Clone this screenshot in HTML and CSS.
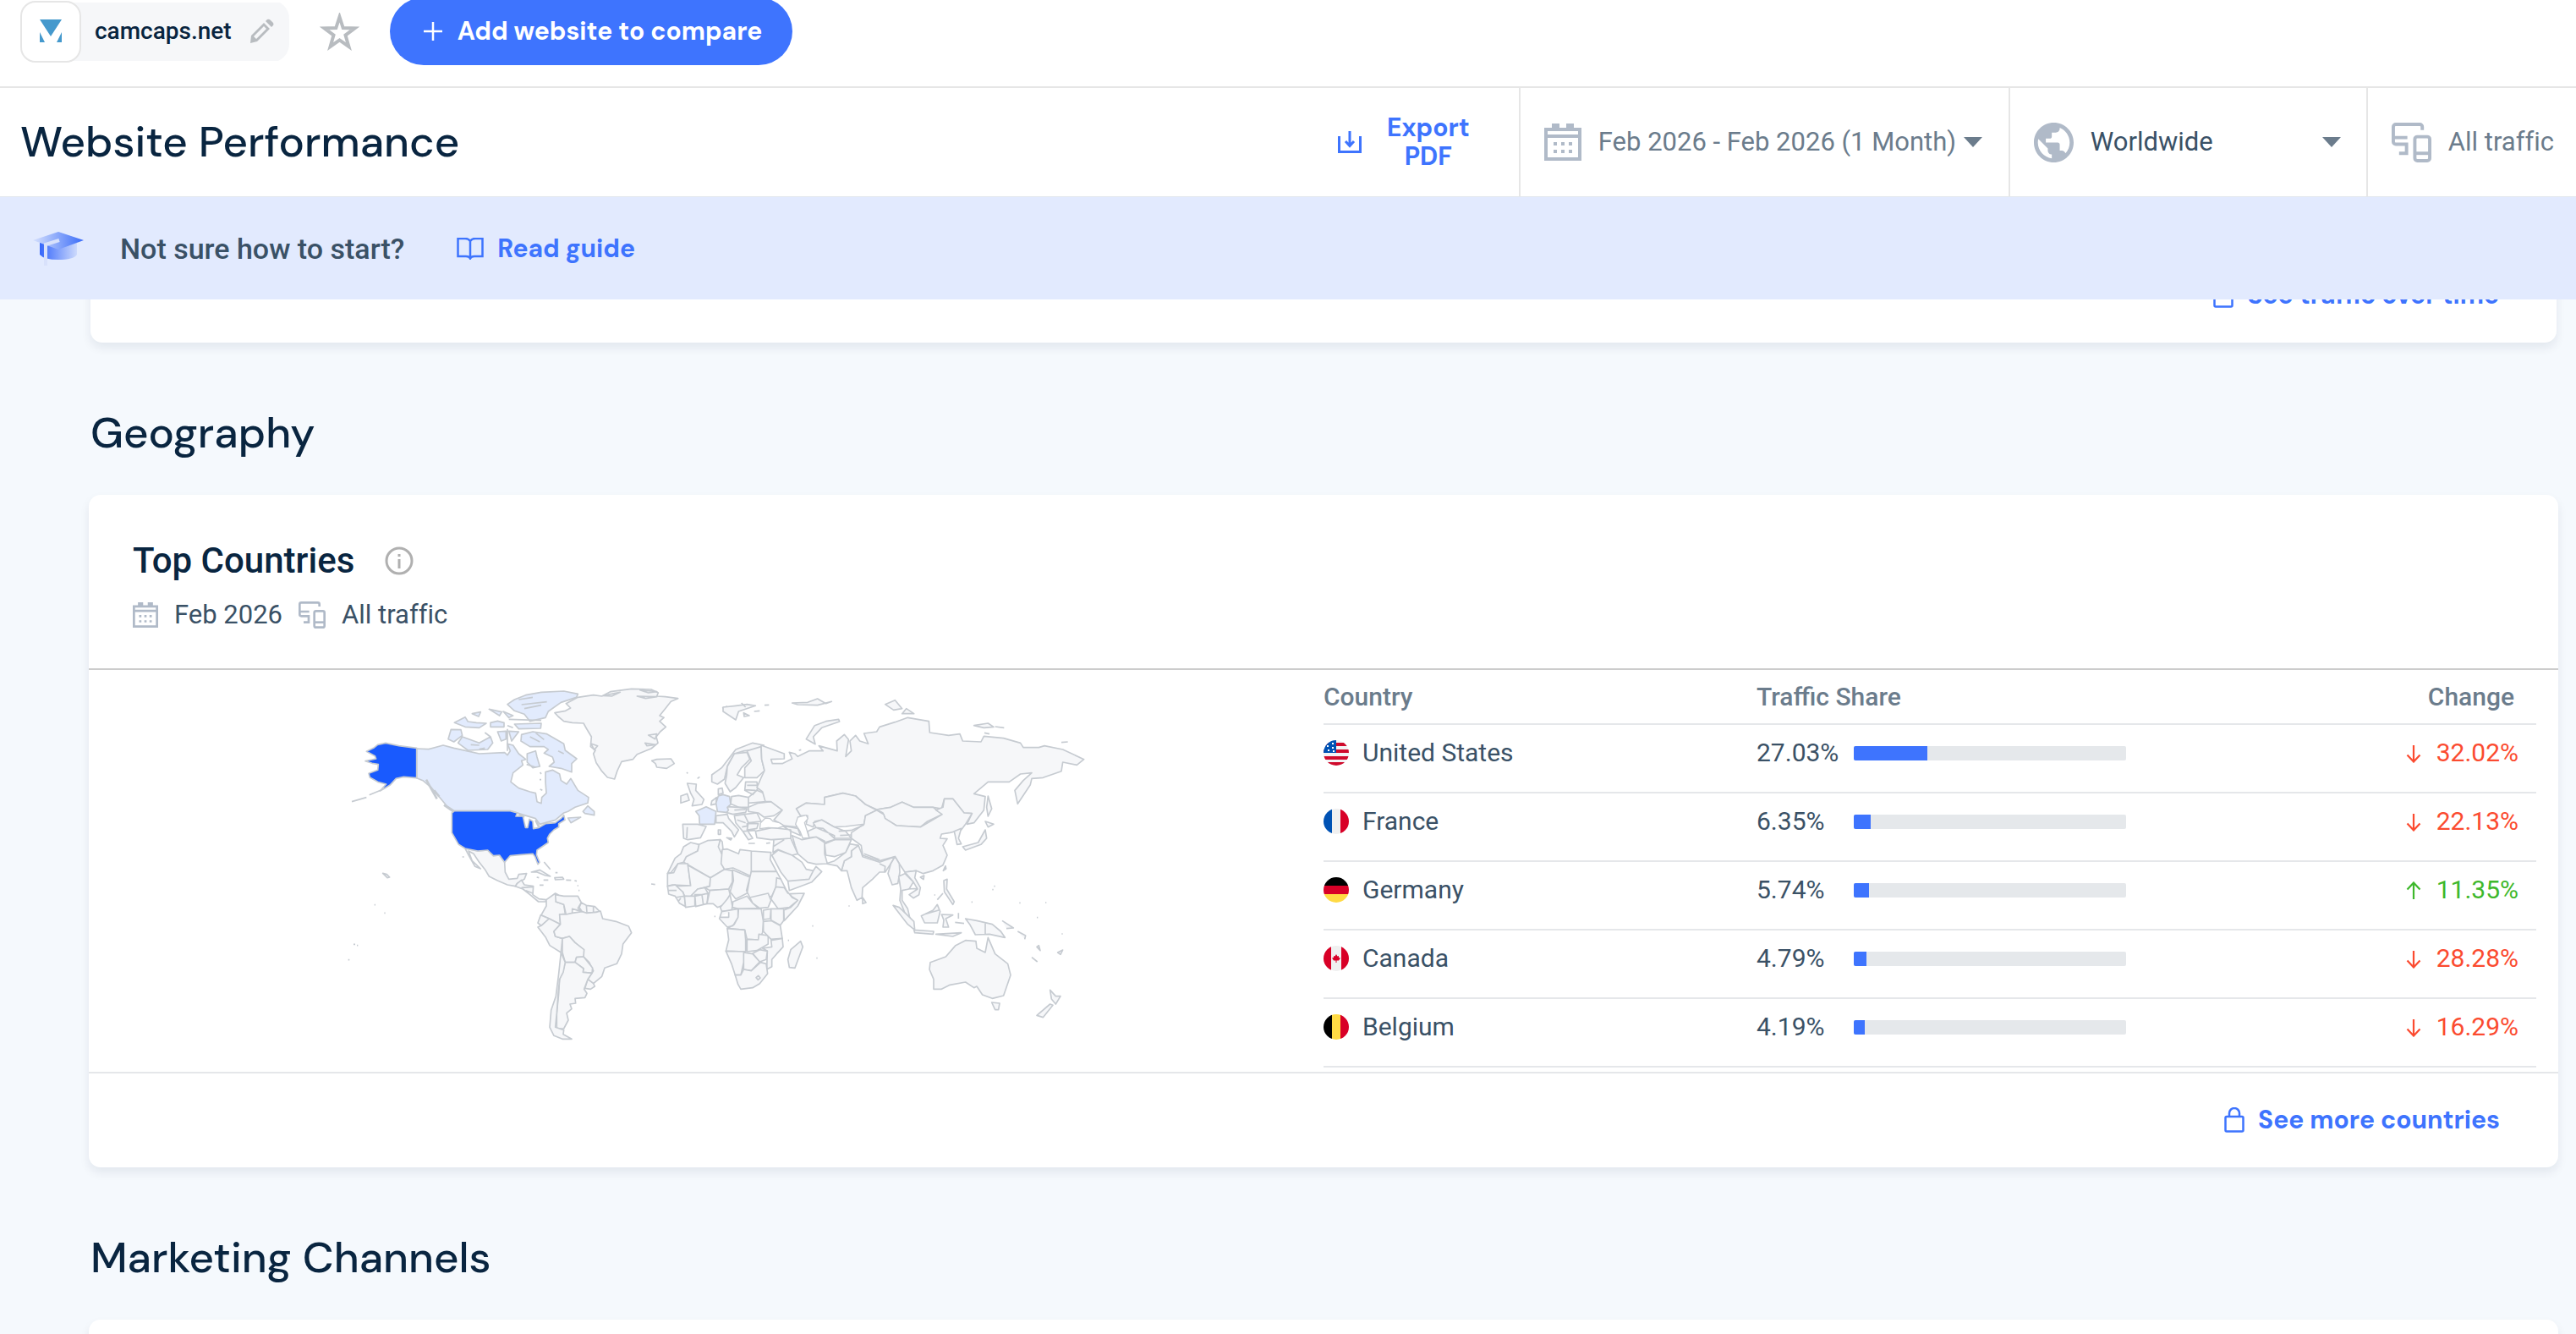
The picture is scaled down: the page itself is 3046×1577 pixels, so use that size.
FILE: index.html
```
<!DOCTYPE html>
<html lang="en">
<head>
  <meta charset="UTF-8" />
  <meta name="viewport" content="width=device-width, initial-scale=1.0"/>
  <title>Website Performance</title>
  <link rel="stylesheet" href="styles.css">
</head>
<body>

  <!-- Shared icons -->
  <svg class="sprite" aria-hidden="true">
    <symbol id="i-calendar" viewBox="0 0 44 44">
      <path d="M9 0h9v5h8V0h9v5h9v39H0V5h9zM4 9v4h36V9zM4 17v23h36V17z" fill-rule="evenodd"/>
      <path d="M11 22h4v4h-4zM20 22h4v4h-4zM29 22h4v4h-4zM11 31h4v4h-4zM20 31h4v4h-4zM29 31h4v4h-4z"/>
    </symbol>
    <symbol id="i-devices" viewBox="0 0 48 48">
      <g fill="none" stroke="currentColor" stroke-width="4">
        <path d="M37 9V5a3 3 0 0 0-3-3H5a3 3 0 0 0-3 3v18a3 3 0 0 0 3 3h13v11H9M2 18h17"/>
        <rect x="28" y="17" width="18" height="29" rx="3"/>
        <path d="M28 37h18"/>
      </g>
    </symbol>
    <symbol id="i-globe" viewBox="2 2 20 20">
      <path d="M12 2C6.480 2 2 6.480 2 12s4.480 10 10 10 10-4.480 10-10S17.520 2 12 2zm-1 17.930c-3.950-.490-7-3.850-7-7.930 0-.620.080-1.210.210-1.790L9 15v1c0 1.100.900 2 2 2v1.930zm6.900-2.540c-.260-.810-1-1.390-1.900-1.390h-1v-3c0-.550-.450-1-1-1H8v-2h2c.550 0 1-.450 1-1V7h2c1.100 0 2-.900 2-2v-.410c2.930 1.190 5 4.060 5 7.410 0 2.080-.800 3.970-2.100 5.390z"/>
    </symbol>
    <symbol id="i-caret" viewBox="0 0 22 12"><path d="M0 0h22L11 12z"/></symbol>
    <symbol id="i-lock" viewBox="0 0 24 30">
      <g fill="none" stroke="currentColor" stroke-width="2.500">
        <rect x="1.500" y="11" width="21" height="17.500" rx="1.500"/>
        <path d="M6 11V7a6 6 0 0 1 12 0v4"/>
      </g>
    </symbol>
    <symbol id="i-down" viewBox="0 0 18 22"><path d="M9 1v19M1.500 12.500L9 20.500l7.500-8" fill="none" stroke="currentColor" stroke-width="2.200"/></symbol>
    <symbol id="i-up" viewBox="0 0 18 22"><path d="M9 21V2M1.500 9.500L9 1.500l7.500 8" fill="none" stroke="currentColor" stroke-width="2.200"/></symbol>
  </svg>

  <!-- Sticky top area -->
  <header class="top">
    <div class="site-bar">
      <div class="site-chip">
        <span class="favicon">
          <svg width="28" height="28" viewBox="0 0 28 28"><path d="M1 0h26L14 20zM1 15l6 12H1zM27 15l-6 12h6z" fill="#4599cd"/></svg>
        </span>
        <span class="site-name">camcaps.net</span>
        <button class="icon-btn" aria-label="Edit website">
          <svg width="30" height="30" viewBox="0 0 30 30" fill="#b8bcc0"><path d="M2 20L17 5l7 7L9 27l-8 2zM5 21l3 3L20 12l-3-3z" fill-rule="evenodd"/><path d="M19 3l2-2q2-1 4 1l3 3q1 2 0 3l-2 2z"/></svg>
        </button>
      </div>
      <button class="icon-btn star" aria-label="Add to favorites">
        <svg width="47" height="46" viewBox="0 0 47 46"><path d="M23.500 5l4.200 13 13.800.4-11 8.200 3.900 13.400-10.900-7.600-10.900 7.600 3.900-13.400-11-8.200 13.800-.4z" fill="none" stroke="#b8bcc0" stroke-width="4"/></svg>
      </button>
      <button class="compare-btn">
        <svg width="22" height="22" viewBox="0 0 22 22"><path d="M11 0v22M0 11h22" stroke="#fff" stroke-width="2.500"/></svg>
        Add website to compare
      </button>
    </div>

    <div class="title-bar">
      <h1>Website Performance</h1>
      <button class="export-btn">
        <svg width="28" height="26" viewBox="0 0 28 26"><path d="M1.500 6v18.500h25V6M14 0v17M9 12l5 5.500 5-5.500" fill="none" stroke="#3e74fe" stroke-width="3"/></svg>
        <span>Export PDF</span>
      </button>
      <div class="filter filter-date">
        <svg class="icon" width="44" height="44"><use href="#i-calendar"/></svg>
        <select aria-label="Date range"><option>Feb 2026 - Feb 2026 (1 Month)</option></select>
        <svg class="caret" width="22" height="12"><use href="#i-caret"/></svg>
      </div>
      <div class="filter filter-country">
        <svg class="icon" width="47" height="47"><use href="#i-globe"/></svg>
        <select class="dark" aria-label="Country"><option>Worldwide</option></select>
        <svg class="caret" width="22" height="12"><use href="#i-caret"/></svg>
      </div>
      <button class="filter filter-traffic">
        <svg class="icon" width="47" height="47"><use href="#i-devices"/></svg>
        <span>All traffic</span>
      </button>
    </div>

    <div class="guide-bar">
      <svg width="62" height="42" viewBox="0 0 62 42">
        <defs>
          <linearGradient id="capTop" x1="0" x2="1"><stop offset="0" stop-color="#d5e0fd"/><stop offset="1" stop-color="#3a6cf8"/></linearGradient>
          <linearGradient id="capBase" x1="0" x2="1"><stop offset="0" stop-color="#3566fb"/><stop offset="1" stop-color="#cddafc"/></linearGradient>
        </defs>
        <path d="M9 14h44v14q-4 6-22 6-17 0-22-6z" fill="url(#capBase)"/>
        <path d="M1 11L31 1l30 10-30 11z" fill="url(#capTop)"/>
        <path d="M32 11L16 16v25" fill="none" stroke="#d8e1fb" stroke-width="4"/>
      </svg>
      <p>Not sure how to start?</p>
      <a class="guide-link" href="#">
        <svg width="32" height="26" viewBox="0 0 32 26"><path d="M16 4q-2-3-6-3H1.500v21H11q4 0 5 2.500Q17 22 21 22h9.500V1H22q-4 0-6 3zv20" fill="none" stroke="#3e74fe" stroke-width="2.500"/></svg>
        Read guide
      </a>
    </div>
  </header>

  <main>
    <section class="card card-scrolled">
      <a class="more-link" href="#"><svg width="24" height="30"><use href="#i-lock"/></svg>See traffic over time</a>
    </section>

    <h2>Geography</h2>

    <section class="card">
      <div class="card-head">
        <h3>Top Countries
          <svg width="34" height="34" viewBox="0 0 34 34"><circle cx="17" cy="17" r="15" fill="none" stroke="#b0b0b0" stroke-width="3"/><path d="M15.500 15h3v11h-3zM15.500 9h3v3h-3z" fill="#b0b0b0"/></svg>
        </h3>
        <div class="card-meta">
          <svg class="icon" width="30" height="30"><use href="#i-calendar"/></svg>
          <span>Feb 2026</span>
          <svg class="icon" width="32" height="32"><use href="#i-devices"/></svg>
          <span>All traffic</span>
        </div>
      </div>

      <div class="card-body">
        <div class="map">
          <svg width="920" height="459" viewBox="0 3 2760 1377" role="img" aria-label="World map">
            <!-- Americas, Greenland, western Africa -->
            <g class="land">
              <path d="M768 155L806 148 824 138 808 122 850 100 905 92 935 96 965 80 1040 70 1110 72 1135 84 1130 96 1160 98 1205 104 1180 115 1160 140 1140 165 1155 172 1140 185 1162 205 1142 222 1128 240 1134 262 1110 282 1060 302 1045 320 1005 328 990 360 980 390 955 384 935 362 915 332 905 300 912 288 895 275 898 240 880 210 870 192 830 190 800 185 780 168Z"/>
              <path d="M940 94L1000 82 970 96ZM1070 74L1130 80 1100 84ZM1060 96L1130 98 1090 104ZM1100 234L1130 230 1124 248ZM1088 262L1125 268 1095 272ZM896 264L920 272 908 286Z"/>
              <path d="M450 636L495 645 530 642 550 662 572 660 590 685 592 720 605 745 635 742 640 728 668 725 660 745 635 760 628 770 600 765 565 750 535 735 520 710 500 685 480 655 462 645 475 680 505 708 485 700 465 665Z"/>
              <path d="M635 760L650 748 660 765 692 770 690 800 712 815 738 818 735 825 710 825 680 800 655 780 628 770ZM650 775L692 772M665 785L690 795"/>
              <path d="M685 720L715 712 752 735 735 732 705 720ZM768 740L795 738 800 745 770 747ZM728 748L745 748M808 748L826 749M730 684L752 710M704 738L712 740"/>
              <path d="M738 818L770 795 780 800 772 825 800 835 805 868 785 870 788 905 748 885 720 872 738 840Z"/>
              <path d="M770 800L800 805 850 805 862 828 850 848 865 860 830 850 830 868 808 870 800 835 772 825Z"/>
              <path d="M862 828L880 838 910 842 930 862 915 862 880 865 865 860 855 845ZM880 838L882 862M905 842L905 862"/>
              <path d="M718 872L748 885 720 910 708 900Z"/>
              <path d="M748 885L788 905 765 930 770 948 795 955 790 1005 750 980 735 950 708 915 720 910Z"/>
              <path d="M785 870L808 870 830 865 865 860 880 865 915 862 930 858 938 885 985 895 1030 912 1040 935 1010 975 1005 1010 988 1045 945 1060 935 1090 905 1115 885 1100 905 1070 890 1040 870 1020 870 995 840 970 820 948 795 955 770 948 765 930 788 905Z"/>
              <path d="M795 955L820 948 840 970 872 995 870 1020 845 1022 840 1040 805 1040 795 1005Z"/>
              <path d="M845 1022L870 1020 890 1045 902 1060 900 1078 868 1075 870 1062 840 1040Z"/>
              <path d="M885 1100L905 1115 910 1125 895 1135 875 1132Z"/>
              <path d="M805 1040L840 1040 870 1062 868 1075 900 1078 885 1100 872 1135 882 1150 875 1165 840 1168 842 1185 822 1188 828 1205 810 1220 816 1245 800 1275 775 1275 775 1220 782 1150 785 1100 800 1060Z"/>
              <path d="M790 1005L805 1040 798 1075 785 1100 780 1150 775 1220 770 1270 800 1280 798 1295 828 1312 795 1312 765 1300 750 1270 755 1210 772 1160 782 1080Z"/>
              <path d="M1112 325L1130 320 1180 318 1192 335 1165 352 1130 348 1125 335Z"/>
              <path d="M1238 405L1270 408 1268 430 1297 462 1290 480 1255 485 1262 462 1250 440ZM1215 450L1238 442 1245 465 1215 475Z"/>
              <path d="M1222 550L1275 550 1305 558 1285 598 1240 605 1225 600ZM1238 560L1236 600"/>
              <path d="M1250 615L1280 622 1275 645 1235 665 1225 685 1205 690 1180 722 1168 725 1195 670 1215 655 1225 630Z"/>
              <path d="M1280 622L1310 608 1355 605 1352 625 1362 660 1360 690 1370 710 1320 740 1225 685 1235 665 1275 645Z"/>
              <path d="M1355 605L1362 612 1365 640 1360 655 1348 630Z"/>
              <path d="M1168 725L1190 722 1205 690 1240 690 1250 768 1185 765 1168 770Z"/>
              <path d="M1240 695L1320 740 1318 770 1275 780 1250 808 1228 805 1222 790 1200 785 1195 770 1250 768Z"/>
              <path d="M1320 740L1370 710 1398 715 1398 755 1385 780 1318 785 1300 775 1318 770Z"/>
              <path d="M1168 770L1195 765 1222 790 1228 805 1232 842 1210 830 1195 805 1172 798ZM1172 785L1200 785M1195 810L1228 805M1205 825L1215 812"/>
              <path d="M1228 805L1265 805 1265 840 1232 845ZM1265 800L1290 800 1295 835 1268 842ZM1250 805L1275 780 1300 775 1312 795 1290 800 1265 805ZM1290 800L1312 795 1308 832 1295 835Z"/>
              <path d="M1318 785L1385 780 1390 800 1370 835 1345 845 1330 832 1308 832Z"/>
              <path d="M158 724L172 728 182 738 174 740ZM1110 762L1124 764M48 470L100 455M110 446L150 430M1362 138L1380 132M440 666L446 666M128 836L132 836M163 865L167 865M54 976L60 976M66 980L70 980M35 1031L40 1031M770 722L778 722M838 750L846 752M848 768L852 768M852 785L856 785M714 766L728 766M1236 366L1240 370M1274 388L1282 382"/>
            </g>
            <g class="land country-light">
              <path d="M278 282L320 284 372 270 410 280 465 292 500 300 590 296 600 305 610 290 600 265 620 270 640 300 665 320 650 325 655 340 620 368 612 400 640 422 680 435 700 440 705 470 720 476 722 455 738 440 735 400 735 365 760 358 785 372 790 395 810 408 825 388 850 430 888 455 885 475 840 490 815 505 800 510 770 535 715 550 700 530 660 518 612 503 412 503 385 485 360 455 330 420 300 395 278 386Z"/>
              <path d="M440 240L500 262 540 240 548 262 530 285 460 288 425 262ZM400 214L435 215 440 235 410 258 390 248ZM470 268L500 270M500 284L520 280"/>
              <path d="M650 232L690 222 740 230 800 265 805 288 846 318 828 335 828 365 790 352 748 345 766 330 760 312 730 298 745 285 730 275 680 275 648 255ZM680 240L715 258M700 226L730 250M780 290L800 300"/>
              <path d="M600 125L625 108 665 92 720 82 800 78 850 88 845 100 790 118 745 150 735 172 680 185 660 160 625 148ZM640 108L690 100M650 126L740 116M660 140L720 128"/>
              <path d="M625 195L720 192 718 210 640 212ZM412 190L450 170 460 186 490 190 525 192 500 208 450 205ZM540 190L565 184 588 190 588 205 540 205ZM475 158L505 152 498 168ZM535 142L580 152 572 165ZM585 150L620 165 605 172ZM605 178L720 182M600 200L620 208"/>
              <path d="M565 222L595 220 595 248 578 255ZM605 220L640 222 615 255ZM670 300L700 290 705 312 715 345 690 350 670 330ZM600 212L600 290M520 225L540 240"/>
              <path d="M868 505L885 485 908 505 908 518 875 512ZM815 528L860 525 825 545ZM668 338L700 348M716 366L720 372M714 392L720 392M716 426L724 430"/>
              <path d="M1268 505L1305 488 1340 505 1335 550 1282 550 1280 520Z"/>
            </g>
            <path class="coast" d="M312 392L330 425 350 460M340 430L358 452M375 482L410 506M640 515L660 525M700 535L712 560"/>
            <g class="land country-top">
              <path d="M278 280L278 386 232 382 205 388 185 410 160 425 148 432 170 408 140 400 112 384 108 370 140 358 142 338 120 334 96 326 134 318 130 308 100 292 125 280 140 268 168 262 215 272Z"/>
              <path d="M403 510L412 503 610 503 635 510 630 522 655 522 664 562 672 562 678 532 690 540 692 566 712 562 735 548 770 545 790 530 800 518 804 535 782 548 782 560 765 570 750 585 742 600 745 615 705 642 703 658 714 685 708 692 698 665 690 655 650 658 610 662 590 685 572 660 550 662 530 642 495 645 450 636 427 622 403 580Z"/>
            </g>
            <!-- Europe, Africa, Asia, Oceania -->
            <g class="land" transform="translate(1320 0)">
              <path d="M42 640L60 638 100 655 105 640 145 645 145 735 80 705 50 710 38 690ZM145 645L215 650 212 675 235 718 145 718Z"/>
              <path d="M78 712L140 738 130 795 90 815 70 790 82 750ZM145 718L235 718 250 745 232 775 218 805 190 815 140 810 128 785 140 738Z"/>
              <path d="M232 772L262 775 290 810 310 820 280 845 240 850 215 815ZM280 797L333 795 310 840 262 892 260 855 285 845 310 820 290 808ZM235 740L250 745 275 795 262 775 232 772Z"/>
              <path d="M70 800L78 840 75 860 40 858 35 845 60 815ZM80 825L130 805 150 830 170 848 100 850 78 845ZM140 810L205 795 215 820 205 845 175 848 150 830Z"/>
              <path d="M100 850L180 850 188 895 185 935 170 960 130 958 122 925 60 920 85 905 98 880ZM40 860L98 850 98 880 80 910 60 915 32 885ZM35 880L65 880 65 862"/>
              <path d="M60 920L122 925 125 960 125 1002 55 1000 65 960ZM130 958L170 960 172 940 205 945 205 975 165 998 130 1002Z"/>
              <path d="M215 850L260 850 260 892 248 908 215 890ZM188 855L215 850 212 885 188 888ZM188 895L215 892 248 910 255 955 215 958 188 930Z"/>
              <path d="M215 962L255 955 258 985 235 1010 218 1030 218 1055 200 1065 202 1000 185 990 218 985Z"/>
              <path d="M55 1000L125 1002 118 1005 118 1040 108 1085 88 1085 75 1045ZM118 1005L150 1010 175 1038 145 1070 118 1065ZM150 1008L175 995 202 1000 198 1030 175 1038Z"/>
              <path d="M88 1085L108 1085 118 1065 145 1070 178 1040 198 1045 203 1080 175 1115 150 1130 108 1135 98 1118ZM162 1094L170 1087 177 1095 169 1102Z"/>
              <path d="M320 965L328 985 300 1060 280 1058 275 1030 285 995Z"/>
              <path d="M5 375L40 350 90 285 150 262 190 270 165 285 120 290 85 300 60 345 50 390 25 408 5 400Z"/>
              <path d="M60 345L85 300 130 295 140 320 110 350 95 375 118 385 90 420 70 435 52 405 58 375ZM130 290L180 275 182 320 192 360 165 385 122 385 122 350 145 325Z"/>
              <path d="M28 445L28 425 42 422 45 440ZM20 520L60 515 65 530 100 570 85 595 75 575 45 545 20 545ZM28 570L36 570 36 586 28 586ZM58 598L76 600 72 606ZM5 468L22 455 20 478 2 482ZM135 618L158 618M198 618L212 616"/>
              <path d="M75 452L100 448 135 455 135 490 100 490 72 478ZM135 455L165 430 190 440 198 470 135 475ZM125 400L165 400 168 425 150 445 122 430ZM130 412L166 412M122 428L160 430"/>
              <path d="M60 488L100 490 130 495 125 508 80 515 55 508ZM85 500L125 498M120 515L165 510 180 540 135 545ZM85 520L120 515 135 545 130 570 150 600 135 605 115 575 90 545ZM130 548L170 548 165 565 132 570ZM95 535L125 545M112 560L132 556M118 575L160 572"/>
              <path d="M135 490L170 475 215 470 255 500 225 520 190 525 170 510 135 505Z"/>
              <path d="M180 270L262 300 262 318 215 320 220 335 255 335 290 318 280 295 300 300 310 310 350 290 400 290 385 272 450 290 448 255 475 232 490 250 480 310 500 290 495 255 515 235 530 255 560 265 545 228 590 222 600 205 655 188 700 172 775 185 778 225 845 235 885 230 895 255 960 258 970 238 1040 245 1100 262 1110 278 1165 278 1185 272 1250 285 1325 320 1300 340 1250 330 1245 362 1180 385 1140 388 1135 410 1090 478 1080 430 1110 395 1140 368 1100 372 1060 400 985 400 935 442 975 452 970 500 935 545 910 550 928 512 900 510 860 460 830 460 820 495 790 490 720 490 680 472 640 490 590 498 550 480 515 450 470 440 405 455 405 480 340 475 305 495 320 520 305 560 260 555 225 535 255 500 215 470 195 470 185 435 165 420 180 385 192 360 182 320Z"/>
              <path d="M305 495L340 475 405 480 405 455 470 440 515 450 550 480 590 500 550 520 545 550 480 558 440 560 395 535 370 540 365 560 340 550 345 520 320 520Z"/>
              <path d="M590 498L640 490 680 472 720 490 790 490 822 515 770 540 745 560 660 555 620 530 612 510Z"/>
              <path d="M590 500L615 515 620 530 660 555 745 560 822 515 800 500 825 490 830 460 860 460 900 510 928 512 905 550 890 570 850 580 820 585 815 600 840 602 825 625 840 660 825 695 790 715 755 725 730 715 690 720 670 690 655 665 600 680 540 660 535 625 500 600 500 580 545 550 550 520Z"/>
              <path d="M500 640L525 625 535 650 540 665 600 685 655 665 640 690 620 720 600 720 575 745 540 775 538 810 520 820 500 775 485 715 465 715 475 680 500 665ZM600 690L620 700 618 718M540 810L552 828 540 832ZM545 655L600 676"/>
              <path d="M410 690L440 680 480 650 495 620 525 625 500 645 500 665 475 680 465 715 450 698ZM405 620L440 605 500 605 480 650 440 665 410 660Z"/>
              <path d="M290 590L325 605 375 595 405 610 405 655 415 690 375 692 345 685 310 655 300 625ZM345 575L375 562 440 590 440 605 405 615 375 595 350 598ZM365 545L395 535 440 560 480 575 500 600 440 600 400 565 375 562ZM455 575L500 572 545 552M460 590L500 588"/>
              <path d="M160 575L220 562 285 570 285 600 215 605 165 598ZM225 605L285 600 310 655 290 660 240 640 222 650ZM218 660L240 642 290 660 325 685 340 710 365 715 350 745 275 752 250 720ZM275 752L350 745 365 715 375 700 395 718 360 755 280 785ZM255 555L310 565 320 590 285 575ZM222 630L262 605"/>
              <path d="M640 690L655 665 670 690 672 720 665 760 645 765 630 725ZM668 735L690 725 720 755 705 780 680 785 680 820 700 850 708 885 690 865 672 820 675 780ZM690 720L730 715 725 740 745 775 740 800 720 812 705 800 735 780 720 755ZM700 780L732 778"/>
              <path d="M648 838L670 845 722 895 725 925 700 905ZM722 925L792 930 790 940 725 935ZM748 875L790 855 805 835 815 860 805 900 760 900ZM758 870L810 855M820 870L860 872 835 885 845 915 825 915 828 890ZM880 865L880 885M868 898L900 902M800 940L890 935 860 948Z"/>
              <path d="M905 885L945 892 1000 905 1030 930 1045 952 990 940 940 942 920 905ZM975 898L975 942M1035 892L1075 918 1050 920M1090 930L1118 945 1115 958M828 750L840 745 838 780 865 825 860 835 830 790ZM805 818L825 795M826 715L834 698 836 708ZM745 738L758 732 756 746Z"/>
              <path d="M895 630L950 615 975 570 980 600 960 622 905 642ZM975 540L1005 550 985 560ZM985 450L998 495 985 522 980 490ZM865 575L890 565 880 600 890 620 875 622Z"/>
              <path d="M780 1040L835 1020 870 980 905 962 942 965 945 990 975 1005 985 952 1010 1010 1055 1045 1065 1085 1040 1158 1000 1168 965 1155 945 1125 935 1130 905 1110 850 1120 820 1135 792 1135 792 1100 777 1065ZM998 1182L1026 1185 1022 1208 1010 1208Z"/>
              <path d="M1205 1138L1225 1160 1242 1160 1225 1188 1210 1170ZM1205 1188L1215 1192 1180 1235 1158 1228ZM1140 1022L1160 1038M1158 985L1165 980 1170 998ZM1232 1005L1250 996 1242 1012Z"/>
              <path d="M455 178L458 186 395 208 365 240 372 266 340 248 370 200 410 185ZM45 135L90 130 130 125 160 130 100 150 90 180 45 150ZM118 155L138 165 120 168ZM110 120L125 135M290 120L345 118 380 105 410 122 430 115 380 128 310 126ZM192 128L208 127M155 150L175 148"/>
              <path d="M620 125L655 110 680 140 650 145ZM680 158L695 140 722 158ZM935 200L985 192 1005 205 970 208ZM1010 204L1042 208M972 226L990 230M1245 260L1268 258M314 288L322 286"/>
              <path d="M490 840L494 840M361 911L365 911M376 1025L380 1025M275 962L279 962M926 826L930 826M1000 782L1004 782M1006 770L1010 770M1096 829L1100 829M1188 828L1192 828M1158 881L1162 881M1246 939L1250 939M794 801L798 801M14 877L18 877"/>
              <path class="germany" d="M28 450L45 445 68 452 72 480 60 490 64 500 58 508 25 505 20 475Z"/>
            </g>
            <!-- Caspian and Black Sea -->
            <g class="sea" transform="translate(1320 0)">
              <path d="M310 525L340 518 346 530 334 545 342 570 350 598 328 600 318 575 302 550Z"/>
              <path d="M178 545L195 528 212 530 222 540 245 545 262 556 240 564 205 562 175 566Z"/>
            </g>
          </svg>
        </div>

        <div class="table-wrap">
          <table>
            <thead>
              <tr><th class="col-country">Country</th><th>Traffic Share</th><th class="col-change">Change</th></tr>
            </thead>
            <tbody>
              <tr>
                <td><span class="country"><svg class="flag" viewBox="0 0 30 30"><rect width="30" height="30" fill="#f3f3f5"/><path d="M0 3h30v4H0zM0 11h30v4H0zM0 19h30v4H0zM0 26h30v4H0z" fill="#cf0a2c"/><path d="M0 0h15v15H0z" fill="#0052b4"/><path d="M4 6h2v2H4zM10 3h2v2h-2zM10 8h2v2h-2zM5 11h2v2H5zM11 12h2v2h-2z" fill="#fff"/></svg>United States</span></td>
                <td><span class="share">27.03%<span class="bar"><span class="fill" style="width: 27.03%"></span></span></span></td>
                <td class="col-change down"><svg width="18" height="22"><use href="#i-down"/></svg>32.02%</td>
              </tr>
              <tr>
                <td><span class="country"><svg class="flag" viewBox="0 0 30 30"><path d="M0 0h10v30H0z" fill="#0052b4"/><path d="M10 0h10v30H10z" fill="#f0f0f0"/><path d="M20 0h10v30H20z" fill="#d80027"/></svg>France</span></td>
                <td><span class="share">6.35%<span class="bar"><span class="fill" style="width: 6.35%"></span></span></span></td>
                <td class="col-change down"><svg width="18" height="22"><use href="#i-down"/></svg>22.13%</td>
              </tr>
              <tr>
                <td><span class="country"><svg class="flag" viewBox="0 0 30 30"><path d="M0 0h30v10H0z" fill="#000"/><path d="M0 10h30v10H0z" fill="#d80027"/><path d="M0 20h30v10H0z" fill="#ffda44"/></svg>Germany</span></td>
                <td><span class="share">5.74%<span class="bar"><span class="fill" style="width: 5.74%"></span></span></span></td>
                <td class="col-change up"><svg width="18" height="22"><use href="#i-up"/></svg>11.35%</td>
              </tr>
              <tr>
                <td><span class="country"><svg class="flag" viewBox="0 0 30 30"><rect width="30" height="30" fill="#f0f0f0"/><path d="M0 0h9v30H0zM21 0h9v30h-9z" fill="#d80027"/><path d="M15 10l1.500 2.500 1.500-.5v2l2 .5-2 3h-2.500V20h-1v-2.500H12l-2-3 2-.5v-2l1.500.5z" fill="#d80027"/></svg>Canada</span></td>
                <td><span class="share">4.79%<span class="bar"><span class="fill" style="width: 4.79%"></span></span></span></td>
                <td class="col-change down"><svg width="18" height="22"><use href="#i-down"/></svg>28.28%</td>
              </tr>
              <tr>
                <td><span class="country"><svg class="flag" viewBox="0 0 30 30"><path d="M0 0h10v30H0z" fill="#000"/><path d="M10 0h10v30H10z" fill="#ffda44"/><path d="M20 0h10v30H20z" fill="#d80027"/></svg>Belgium</span></td>
                <td><span class="share">4.19%<span class="bar"><span class="fill" style="width: 4.19%"></span></span></span></td>
                <td class="col-change down"><svg width="18" height="22"><use href="#i-down"/></svg>16.29%</td>
              </tr>
            </tbody>
          </table>
        </div>
      </div>

      <div class="card-foot">
        <a class="more-link" href="#"><svg width="24" height="30"><use href="#i-lock"/></svg>See more countries</a>
      </div>
    </section>

    <h2>Marketing Channels</h2>

    <section class="card card-next"></section>
  </main>

</body>
</html>
```
FILE: styles.css
```
* {
  box-sizing: border-box;
}
html, body {
  margin: 0;
  padding: 0;
  height: 100%;
}
body {
  overflow: hidden;
  font-family: Roboto, sans-serif;
  font-size: 30px;
  line-height: 34px;
  color: #3a5166;
  background-color: #f5f9fd;
}
h1, h2, h3, p {
  margin: 0;
}
h1, h2 {
  font-family: "DM Sans", Inter, sans-serif;
  font-size: 51px;
  font-weight: 500;
  line-height: 60px;
  color: #092540;
}
button, select {
  font: inherit;
  color: inherit;
  background: none;
  border: none;
  padding: 0;
  cursor: pointer;
}
a {
  text-decoration: none;
}
svg {
  display: block;
  flex-shrink: 0;
}
.sprite {
  position: absolute;
  width: 0;
  height: 0;
}

/* Top area */
.top {
  position: sticky;
  top: 0;
  z-index: 10;
  background-color: #fff;
}
.site-bar {
  display: flex;
  align-items: flex-start;
  height: 104px;
  padding-left: 24px;
  border-bottom: 2px solid #e6e6e6;
}
.site-chip {
  display: flex;
  align-items: center;
  height: 74px;
  padding-right: 17px;
  border-radius: 22px;
  background: linear-gradient(#f6f7f9, #f6f7f9) 0 3px / 100% 69px no-repeat;
}
.favicon {
  display: flex;
  align-items: center;
  justify-content: center;
  width: 72px;
  height: 73px;
  border: 2px solid #e6e6e6;
  border-radius: 18px;
  background-color: #fff;
}
.site-name {
  margin: 0 21px 0 16px;
  font-size: 28px;
  font-weight: 500;
  color: #092540;
}
.star {
  margin: 15px 36px 0;
}
.compare-btn {
  display: flex;
  align-items: center;
  gap: 18px;
  height: 80px;
  margin-top: -3px;
  padding: 0 36px 0 40px;
  border-radius: 40px;
  background-color: #3e74fe;
  color: #fff;
  font-family: "DM Sans", Inter, sans-serif;
  font-size: 30px;
  font-weight: 700;
}
.title-bar {
  display: flex;
  height: 129px;
  align-items: center;
  border-bottom: 1px solid #e2e7ee;
}
.title-bar h1 {
  flex: 1;
  padding-left: 24px;
}
.export-btn {
  display: flex;
  align-items: center;
  gap: 30px;
  margin-right: 58px;
  font-family: "DM Sans", Inter, sans-serif;
  font-weight: 700;
  color: #3e74fe;
}
.export-btn span {
  width: min-content;
}
.filter, .card-meta {
  font-size: 31px;
  font-variant-ligatures: none;
}
.filter {
  display: flex;
  align-items: center;
  align-self: stretch;
  gap: 20px;
  padding: 0 26px 0 28px;
  border-left: 2px solid #e6e6e6;
  color: #6b7c8c;
}
.filter select {
  appearance: none;
  height: 48px;
}
.filter .dark {
  flex: 1;
  color: #3a5166;
}
.filter-date {
  padding-right: 31px;
}
.filter-date .caret {
  margin-left: -12px;
}
.filter-country {
  width: 423px;
  padding-right: 30px;
}
.icon {
  fill: #b0bac8;
  color: #b0bac8;
}
.caret {
  fill: #6b7c8c;
}
.guide-bar {
  display: flex;
  align-items: center;
  height: 121px;
  padding-left: 38px;
  background-color: #e2eafe;
}
.guide-bar p {
  margin: 0 62px 0 42px;
  font-size: 34px;
  font-weight: 500;
}
.guide-link, .more-link {
  display: flex;
  align-items: center;
  gap: 16px;
  font-family: "DM Sans", Inter, sans-serif;
  font-size: 30px;
  font-weight: 700;
  color: #3e74fe;
}

/* Content */
main {
  padding: 0 21px 0 105px;
}
.card {
  border-radius: 14px;
  background-color: #fff;
  box-shadow: 0 6px 12px rgba(14, 30, 62, 0.08);
}
.card-scrolled {
  display: flex;
  justify-content: flex-end;
  height: 112px;
  margin: -61px 2px 0;
  padding: 39px 68px 0 0;
}
.card-scrolled .more-link {
  height: 34px;
}
main h2 {
  padding: 77px 0 43px 2px;
}
.card-head {
  padding: 51px 52px 46px;
}
.card-head h3 {
  display: flex;
  align-items: center;
  gap: 36px;
  font-size: 42px;
  font-weight: 500;
  line-height: 54px;
  color: #092540;
}
.card-meta {
  display: flex;
  align-items: center;
  gap: 19px;
  margin-top: 20px;
}
.card-body {
  display: grid;
  grid-template-columns: 1fr 1fr;
  border-top: 2px solid #ccc;
  border-bottom: 2px solid #e5e7ea;
}
.map {
  display: flex;
  justify-content: center;
  padding-left: 50px;
}
.land {
  fill: #f6f7f9;
  stroke: #c6cbd1;
  stroke-width: 5;
  stroke-linejoin: round;
}
.country-light, .germany {
  fill: #e2ebfd;
}
.country-top {
  fill: #195afe;
}
.sea {
  fill: #fff;
  stroke: #c6cbd1;
  stroke-width: 4;
}
.coast {
  fill: none;
  stroke: #c6cbd1;
  stroke-width: 8;
}
.table-wrap {
  padding: 0 26px 5px 0;
}
table {
  width: 100%;
  border-collapse: separate;
  border-spacing: 0;
}
th, td {
  padding: 0;
  vertical-align: top;
  text-align: left;
  border-bottom: 2px solid #e5e7ea;
}
th {
  height: 65px;
  padding-top: 15px;
  font-weight: 500;
  color: #6b7c8c;
}
td {
  height: 81px;
  padding-top: 16px;
}
.col-country {
  width: 512px;
}
.col-change {
  padding-right: 21px;
  text-align: right;
}
th.col-change {
  padding-right: 26px;
}
.col-change svg {
  display: inline-block;
  margin-right: 18px;
  vertical-align: -2px;
}
.down {
  color: #fb4b30;
}
.up {
  color: #3eb82c;
}
.country, .share {
  display: flex;
  align-items: center;
}
.flag {
  width: 30px;
  height: 30px;
  margin-right: 16px;
  border-radius: 50%;
}
.share {
  width: 437px;
  justify-content: space-between;
}
.bar {
  display: flex;
  width: 322px;
  height: 17px;
  border-radius: 2px;
  overflow: hidden;
  background-color: #e5e8eb;
}
.fill {
  background-color: #3e74fe;
}
.card-foot {
  display: flex;
  justify-content: flex-end;
  padding: 38px 69px 39px;
}
.card-next {
  height: 300px;
}
```
